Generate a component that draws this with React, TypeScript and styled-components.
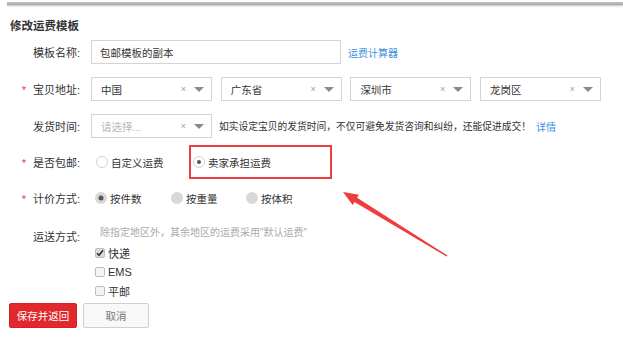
import React from 'react';
import styled, { createGlobalStyle, css } from 'styled-components';

const GlobalStyle = createGlobalStyle`
  body {
    margin: 0;
    background: #fff;
    font-family: "Liberation Sans", "Noto Sans CJK SC", sans-serif;
    color: #333;
  }
`;

const Page = styled.div`
  position: relative;
  width: 623px;
  height: 362px;
  overflow: hidden;
`;

const TopBar = styled.div`
  margin: 2px 0 0 7px;
  height: 3px;
  background: linear-gradient(#c4c4c4, #a9a9a9);
  box-shadow: 0 1px 2px rgba(0, 0, 0, 0.25);
`;

const Title = styled.h2`
  margin: 14px 0 0 10px;
  height: 14px;
  font-size: 11.5px;
  line-height: 14px;
  font-weight: bold;
`;

const Row = styled.div<{ $top: number; $height?: number }>`
  display: flex;
  align-items: center;
  margin-top: ${p => p.$top}px;
  height: ${p => p.$height ?? 24}px;
`;

const Label = styled.div`
  width: 80px;
  flex: none;
  text-align: right;
  font-size: 11px;
  margin-right: 11px;
`;

const Star = styled.span`
  color: #e4393c;
  margin-right: 7px;
`;

const TextInput = styled.div`
  width: 250px;
  height: 24px;
  box-sizing: border-box;
  border: 1px solid #d4d4d4;
  padding-left: 8px;
  display: flex;
  align-items: center;
  font-size: 10.5px;
`;

const Link = styled.a`
  color: #3d8fe0;
  font-size: 10px;
  margin-left: 7px;
  text-decoration: none;
`;

const Selects = styled.div`
  display: flex;
  gap: 8.7px;
`;

const Select = styled.div<{ $placeholder?: boolean }>`
  width: 121px;
  height: 24px;
  box-sizing: border-box;
  border: 1px solid #d4d4d4;
  display: flex;
  align-items: center;
  padding: 0 7px 0 9px;
  font-size: 10.5px;
  color: ${p => (p.$placeholder ? '#b8b8b8' : '#333')};
`;

const SelectText = styled.span`
  flex: 1;
`;

const Clear = styled.span`
  color: #a0a0a0;
  font-size: 9px;
  margin-right: 8px;
`;

const Caret = styled.span`
  width: 0;
  height: 0;
  border-left: 5px solid transparent;
  border-right: 5px solid transparent;
  border-top: 5px solid #8a8a8a;
`;

const Help = styled.span`
  font-size: 9.75px;
  margin-left: 7px;
`;

const DetailLink = styled(Link)`
  margin-left: 5px;
`;

const RadioOption = styled.label<{ $width: number; $boxed?: boolean }>`
  display: flex;
  align-items: center;
  width: ${p => p.$width}px;
  font-size: 10.5px;
  ${p =>
    p.$boxed &&
    css`
      box-sizing: border-box;
      height: 34px;
      border: 2px solid #f03c3c;
      padding-left: 2px;
    `}
`;

const Radio = styled.span<{ $variant: 'empty' | 'dot' | 'filled' | 'disabled' }>`
  width: 12px;
  height: 12px;
  box-sizing: border-box;
  border-radius: 50%;
  margin-right: 3px;
  position: relative;
  flex: none;
  ${p =>
    p.$variant === 'empty' || p.$variant === 'dot'
      ? css`
          border: 1px solid #d2d2d2;
          background: #fff;
        `
      : css`
          background: #d8d8d8;
        `}
  ${p =>
    (p.$variant === 'dot' || p.$variant === 'filled') &&
    css`
      &::after {
        content: '';
        position: absolute;
        left: 50%;
        top: 50%;
        width: ${p.$variant === 'dot' ? 4 : 5}px;
        height: ${p.$variant === 'dot' ? 4 : 5}px;
        border-radius: 50%;
        background: #555;
        transform: translate(-50%, -50%);
      }
    `}
`;

const ShipBlock = styled.div`
  display: flex;
  margin-top: 15px;
`;

const ShipLabel = styled(Label)`
  line-height: 24px;
  align-self: flex-start;
`;

const ShipBody = styled.div`
  display: flex;
  flex-direction: column;
`;

const Hint = styled.div`
  height: 18px;
  line-height: 16px;
  font-size: 10px;
  color: #aaa;
  margin-left: 9px;
`;

const CheckRow = styled.label`
  display: flex;
  align-items: center;
  height: 19px;
  font-size: 11px;
  margin-left: 4px;
`;

const Checkbox = styled.span<{ $checked?: boolean }>`
  width: 10px;
  height: 10px;
  box-sizing: border-box;
  border: 1px solid #bdbdbd;
  border-radius: 2px;
  background: ${p => (p.$checked ? '#dcdcdc' : '#f4f4f4')};
  margin-right: 3px;
  display: flex;
  align-items: center;
  justify-content: center;
`;

const Buttons = styled.div`
  display: flex;
  gap: 6px;
  margin: 3px 0 0 9px;
`;

const Button = styled.button<{ $primary?: boolean }>`
  height: 25px;
  box-sizing: border-box;
  font-family: inherit;
  font-size: 10.5px;
  border-radius: 2px;
  padding: 0;
  ${p =>
    p.$primary
      ? css`
          width: 68px;
          background: #e0282d;
          border: 1px solid #d62227;
          color: #fff;
        `
      : css`
          width: 66px;
          background: #f8f8f8;
          border: 1px solid #cfcfcf;
          color: #777;
        `}
`;

const Arrow = styled.svg`
  position: absolute;
  left: 0;
  top: 0;
  pointer-events: none;
`;

const regions = ['中国', '广东省', '深圳市', '龙岗区'];

export default function App() {
  return (
    <Page>
      <GlobalStyle />
      <TopBar />
      <Title>修改运费模板</Title>

      <Row $top={7}>
        <Label>模板名称:</Label>
        <TextInput>包邮模板的副本</TextInput>
        <Link>运费计算器</Link>
      </Row>

      <Row $top={13}>
        <Label>
          <Star>*</Star>宝贝地址:
        </Label>
        <Selects>
          {regions.map(r => (
            <Select key={r}>
              <SelectText>{r}</SelectText>
              <Clear>×</Clear>
              <Caret />
            </Select>
          ))}
        </Selects>
      </Row>

      <Row $top={13}>
        <Label>发货时间:</Label>
        <Select $placeholder>
          <SelectText>请选择...</SelectText>
          <Clear>×</Clear>
          <Caret />
        </Select>
        <Help>如实设定宝贝的发货时间，不仅可避免发货咨询和纠纷，还能促进成交！</Help>
        <DetailLink>详情</DetailLink>
      </Row>

      <Row $top={7} $height={34}>
        <Label>
          <Star>*</Star>是否包邮:
        </Label>
        <RadioOption $width={93} style={{ marginLeft: 5 }}>
          <Radio $variant="empty" />
          自定义运费
        </RadioOption>
        <RadioOption $width={143} $boxed>
          <Radio $variant="dot" />
          卖家承担运费
        </RadioOption>
      </Row>

      <Row $top={7}>
        <Label>
          <Star>*</Star>计价方式:
        </Label>
        <RadioOption $width={76} style={{ marginLeft: 4 }}>
          <Radio $variant="filled" />
          按件数
        </RadioOption>
        <RadioOption $width={75}>
          <Radio $variant="disabled" />
          按重量
        </RadioOption>
        <RadioOption $width={75}>
          <Radio $variant="disabled" />
          按体积
        </RadioOption>
      </Row>

      <ShipBlock>
        <ShipLabel>运送方式:</ShipLabel>
        <ShipBody>
          <Hint>除指定地区外，其余地区的运费采用"默认运费"</Hint>
          <CheckRow>
            <Checkbox $checked>
              <svg width="8" height="8" viewBox="0 0 8 8">
                <path d="M1 4.2 L3 6.3 L7 1.2" fill="none" stroke="#333" strokeWidth="1.6" />
              </svg>
            </Checkbox>
            快递
          </CheckRow>
          <CheckRow>
            <Checkbox />
            EMS
          </CheckRow>
          <CheckRow>
            <Checkbox />
            平邮
          </CheckRow>
        </ShipBody>
      </ShipBlock>

      <Buttons>
        <Button $primary>保存并返回</Button>
        <Button>取消</Button>
      </Buttons>

      <Arrow width="623" height="362" viewBox="0 0 623 362">
        <polygon
          points="343,192 358.9,194.8 357.1,197.8 447.4,255.4 446.6,256.6 354.5,202 352.7,205"
          fill="#f03c3c"
        />
      </Arrow>
    </Page>
  );
}
